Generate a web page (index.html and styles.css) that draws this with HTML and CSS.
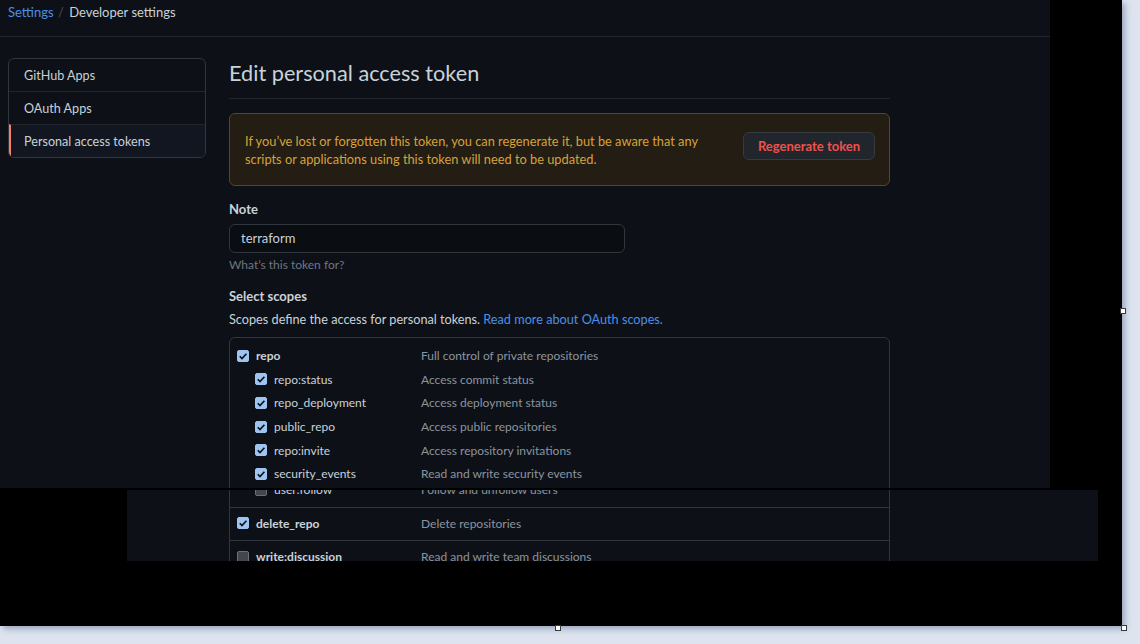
FILE: index.html
```html
<!DOCTYPE html>
<html lang="en">
<head>
<meta charset="utf-8">
<title>Edit personal access token</title>
<link rel="stylesheet" href="styles.css">
</head>
<body>
<div class="stage">
  <div class="page">
    <header class="crumbs">
      <a class="crumb-link" href="#">Settings</a>
      <span class="crumb-sep">/</span>
      <span class="crumb-current">Developer settings</span>
    </header>
    <div class="layout">
      <nav class="menu">
        <a class="menu-item" href="#">GitHub Apps</a>
        <a class="menu-item" href="#">OAuth Apps</a>
        <a class="menu-item selected" href="#">Personal access tokens</a>
      </nav>
      <main class="main">
        <h2 class="title">Edit personal access token</h2>
        <div class="flash">
          <p class="flash-text">If you’ve lost or forgotten this token, you can regenerate it, but be aware that any scripts or applications using this token will need to be updated.</p>
          <button class="btn-danger">Regenerate token</button>
        </div>
        <label class="label">Note</label>
        <div class="input">terraform</div>
        <p class="note">What’s this token for?</p>
        <h3 class="label scopes-title">Select scopes</h3>
        <p class="desc">Scopes define the access for personal tokens. <a class="link" href="#">Read more about OAuth scopes.</a></p>
        <div class="scopes">
          <div class="group open">
            <div class="row top"><span class="cb on"><svg viewBox="0 0 13 13"><path d="M3 6.8l2.4 2.4L10.2 4"/></svg></span><span class="name">repo</span><span class="what">Full control of private repositories</span></div>
            <div class="row sub"><span class="cb on"><svg viewBox="0 0 13 13"><path d="M3 6.8l2.4 2.4L10.2 4"/></svg></span><span class="name">repo:status</span><span class="what">Access commit status</span></div>
            <div class="row sub"><span class="cb on"><svg viewBox="0 0 13 13"><path d="M3 6.8l2.4 2.4L10.2 4"/></svg></span><span class="name">repo_deployment</span><span class="what">Access deployment status</span></div>
            <div class="row sub"><span class="cb on"><svg viewBox="0 0 13 13"><path d="M3 6.8l2.4 2.4L10.2 4"/></svg></span><span class="name">public_repo</span><span class="what">Access public repositories</span></div>
            <div class="row sub"><span class="cb on"><svg viewBox="0 0 13 13"><path d="M3 6.8l2.4 2.4L10.2 4"/></svg></span><span class="name">repo:invite</span><span class="what">Access repository invitations</span></div>
            <div class="row sub"><span class="cb on"><svg viewBox="0 0 13 13"><path d="M3 6.8l2.4 2.4L10.2 4"/></svg></span><span class="name">security_events</span><span class="what">Read and write security events</span></div>
          </div>
        </div>
      </main>
    </div>
  </div>

  <div class="slice">
    <div class="slice-inner">
      <div class="scopes cont">
        <div class="group">
          <div class="row sub"><span class="cb"></span><span class="name">user:follow</span><span class="what">Follow and unfollow users</span></div>
        </div>
        <div class="group">
          <div class="row top"><span class="cb on"><svg viewBox="0 0 13 13"><path d="M3 6.8l2.4 2.4L10.2 4"/></svg></span><span class="name">delete_repo</span><span class="what">Delete repositories</span></div>
        </div>
        <div class="group">
          <div class="row top"><span class="cb"></span><span class="name">write:discussion</span><span class="what">Read and write team discussions</span></div>
        </div>
      </div>
    </div>
  </div>

  <span class="handle h-right"></span>
  <span class="handle h-bottom"></span>
  <span class="handle h-corner"></span>
</div>
</body>
</html>
```

FILE: styles.css
```css
* { box-sizing: border-box; }
html, body { margin: 0; padding: 0; }
body {
  background: #dde4ef;
  font-family: Lato, "Liberation Sans", sans-serif;
  width: 1140px;
  height: 644px;
  overflow: hidden;
}
.stage {
  position: relative;
  width: 1122px;
  height: 626px;
  background: #000;
  box-shadow: 3px 3px 6px rgba(70, 90, 135, 0.45);
}
.page {
  width: 1050px;
  height: 488px;
  overflow: hidden;
  background: #0d1117;
  color: #c9d1d9;
}
a { text-decoration: none; }

/* breadcrumb */
.crumbs {
  height: 37px;
  border-bottom: 1px solid #21262d;
  padding: 3px 0 0 8px;
  font-size: 13px;
  line-height: 18px;
}
.crumb-link { color: #4c8fe6; }
.crumb-sep { color: #484f58; margin: 0 2px 0 1px; }
.crumb-current { color: #c9d1d9; }

/* layout */
.layout {
  display: flex;
  gap: 23px;
  padding: 21px 0 0 8px;
}
.menu {
  width: 198px;
  flex: none;
  align-self: flex-start;
  border: 1px solid #30363d;
  border-radius: 6px;
  display: flex;
  flex-direction: column;
  overflow: hidden;
}
.menu-item {
  height: 33px;
  padding: 1px 15px 0;
  display: flex;
  align-items: center;
  font-size: 12.6px;
  color: #c9d1d9;
  border-top: 1px solid #21262d;
}
.menu-item:first-child { border-top: 0; height: 32px; }
.menu-item.selected {
  background: #111620;
  border-left: 2px solid #f78166;
  padding-left: 13px;
}

.main { width: 661px; flex: none; }
.title {
  margin: 0;
  font-weight: 400;
  font-size: 21.7px;
  line-height: 30px;
  padding-bottom: 10px;
  border-bottom: 1px solid #21262d;
  color: #c9d1d9;
}
.flash {
  margin-top: 14px;
  display: flex;
  align-items: flex-start;
  justify-content: space-between;
  padding: 18px 14px 17px 15px;
  border: 1px solid #5a4619;
  border-radius: 6px;
  background: #231d13;
}
.flash-text {
  margin: 0;
  width: 470px;
  font-size: 12.8px;
  line-height: 18px;
  color: #d7a23a;
}
.btn-danger {
  height: 28px;
  width: 132px;
  padding: 0;
  background: #21262d;
  border: 1px solid #363b42;
  border-radius: 6px;
  color: #f0514b;
  font-family: inherit;
  font-weight: 700;
  font-size: 13px;
}
.label {
  display: block;
  margin: 14px 0 0;
  font-size: 13px;
  font-weight: 700;
  line-height: 18px;
  color: #c9d1d9;
}
.input {
  margin-top: 6px;
  width: 396px;
  height: 29px;
  padding: 0 11px;
  border: 1px solid #30363d;
  border-radius: 6px;
  background: #0a0d12;
  font-size: 13px;
  line-height: 27px;
  color: #c9d1d9;
}
.note {
  margin: 3px 0 0;
  font-size: 12px;
  line-height: 18px;
  color: #6e7681;
}
.scopes-title { margin-top: 13px; }
.desc {
  margin: 5px 0 0;
  font-size: 12.7px;
  line-height: 18px;
  color: #c9d1d9;
}
.link { color: #4c8fe6; }

.scopes {
  margin-top: 9px;
  width: 661px;
  border: 1px solid #30363d;
  border-radius: 6px;
}
.group {
  padding: 6px 0 5px;
  border-bottom: 1px solid #30363d;
}
.group.open { padding-bottom: 40px; }
.row {
  height: 23.6px;
  display: flex;
  align-items: center;
  font-size: 12px;
}
.row.top { padding-left: 7px; }
.row.sub { padding-left: 25px; }
.cb {
  flex: none;
  width: 12px;
  height: 12px;
  border-radius: 2px;
  background: #43464c;
  border: 1px solid #6b6f76;
  display: flex;
}
.cb.on { background: #9ec4f2; border-color: #9ec4f2; }
.cb svg { width: 12px; height: 12px; margin: -1px; }
.cb path { fill: none; stroke: #0d1117; stroke-width: 1.8; }
.name {
  width: 172px;
  padding-left: 7px;
  color: #c9d1d9;
}
.row.sub .name { width: 154px; }
.row.top .name { font-weight: 700; }
.what { color: #8b949e; }

/* second pasted slice */
.slice {
  position: absolute;
  left: 127px;
  top: 490px;
  width: 971px;
  height: 71px;
  overflow: hidden;
  background: #0d1117;
}
.slice-inner { margin-top: -12px; padding-left: 102px; }
.scopes.cont {
  margin-top: 0;
  border-top: 0;
  border-radius: 0;
}
.scopes.cont .group { padding: 4px 0 5px; }
.scopes.cont .group:first-child { padding: 0 0 5px; }

/* selection handles */
.handle {
  position: absolute;
  width: 6px;
  height: 6px;
  background: #fff;
  border: 1px solid #3a3a3a;
}
.h-right { left: 1120px; top: 308px; }
.h-bottom { left: 555px; top: 625px; }
.h-corner { left: 1121px; top: 625px; }
```
